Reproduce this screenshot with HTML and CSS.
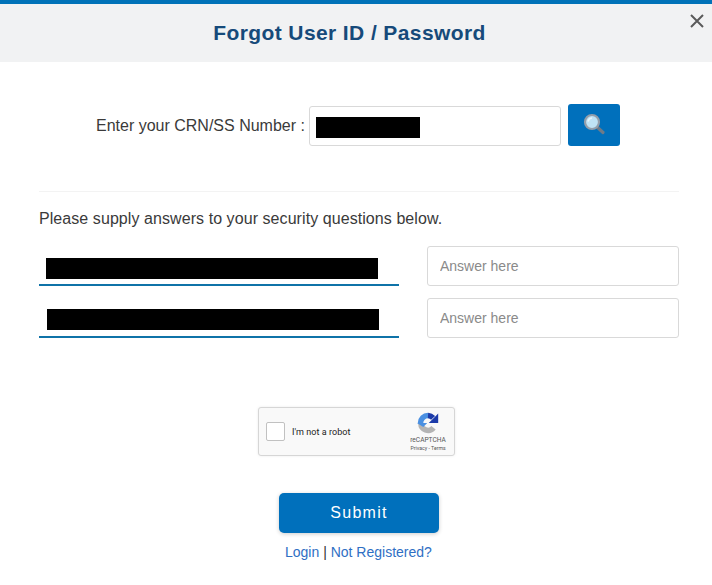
FILE: index.html
```html
<!DOCTYPE html>
<html lang="en">
<head>
<meta charset="utf-8">
<title>Forgot User ID / Password</title>
<link rel="stylesheet" href="styles.css">
</head>
<body>
<div class="modal">
  <header class="head">
    <h1 class="title">Forgot User ID / Password</h1>
    <svg class="close" viewBox="0 0 14 14" aria-label="Close"><path d="M1 1 13 13M13 1 1 13"/></svg>
  </header>
  <main class="body">
    <div class="crn-row">
      <span class="crn-label">Enter your CRN/SS Number :</span>
      <div class="crn-input"><span class="redact redact-crn"></span></div>
      <button class="search" type="button" aria-label="Search">
        <svg class="search-icon" viewBox="0 0 24 24" width="24" height="24">
          <path d="M14.5 14.5 21 20.5" stroke="#6f7b88" stroke-width="3.2" stroke-linecap="round" fill="none"/>
          <circle cx="10" cy="10" r="7" fill="#bfe3f5" stroke="#939eaa" stroke-width="2.2"/>
          <path d="M6 9.5A4.5 4.5 0 0 1 10 6" stroke="#e8f6fc" stroke-width="1.6" fill="none"/>
        </svg>
      </button>
    </div>
    <hr class="rule">
    <p class="intro">Please supply answers to your security questions below.</p>
    <div class="qa">
      <div class="question"><span class="redact redact-q1"></span></div>
      <input class="answer" type="text" placeholder="Answer here">
      <div class="question"><span class="redact redact-q2"></span></div>
      <input class="answer" type="text" placeholder="Answer here">
    </div>
    <div class="captcha">
      <span class="check"></span>
      <span class="robot">I'm not a robot</span>
      <div class="brand">
        <svg viewBox="0 0 28 28" width="22" height="22" fill="none">
          <path d="M5 14A9 9 0 0 0 21 20" stroke="#b4b4b4" stroke-width="7"/>
          <path d="M14 4.5A9.500 9.500 0 0 0 4.500 14" stroke="#4a90e2" stroke-width="7"/>
          <path d="M0 14H13L8 19Z" fill="#4a90e2"/>
          <path d="M14 4.500A9.500 9.500 0 0 1 20.500 7.500" stroke="#1c3aa9" stroke-width="7"/>
          <path d="M27 2V14H15Z" fill="#1c3aa9"/>
        </svg>
        <span class="brand-name">reCAPTCHA</span>
        <span class="brand-links">Privacy - Terms</span>
      </div>
    </div>
    <button class="submit" type="button">Submit</button>
    <p class="links"><a href="#">Login</a> | <a href="#">Not Registered?</a></p>
  </main>
</div>
</body>
</html>
```
FILE: styles.css
```css
* { box-sizing: border-box; }
html, body { margin: 0; height: 100%; background: #fff; overflow: hidden; }
body { font-family: "Liberation Sans", Arial, sans-serif; color: #3a3a3a; }
.modal { width: 712px; height: 585px; }
.head {
  position: relative;
  height: 62px;
  border-top: 4px solid #0072b8;
  background: #f1f2f3;
  display: flex;
  align-items: center;
  justify-content: center;
  padding-right: 13px;
}
.title {
  margin: 0;
  font-size: 21px;
  font-weight: bold;
  letter-spacing: 0.4px;
  color: #164a7a;
}
.close {
  position: absolute;
  top: 10px;
  right: 8px;
  width: 14px;
  height: 14px;
  fill: none;
  stroke: #5a5a5a;
  stroke-width: 2;
}
.body { padding: 42px 33px 0 39px; display: flex; flex-direction: column; }
.crn-row { display: flex; align-items: center; height: 42px; padding-left: 57px; }
.crn-label { font-size: 16px; width: 213px; white-space: nowrap; padding-top: 1px; }
.crn-input {
  width: 252px;
  height: 40px;
  margin-top: 2px;
  border: 1px solid #d9d9d9;
  border-radius: 3px;
  padding: 10px 6px;
}
.redact { display: block; height: 21px; background: #000; }
.redact-crn { width: 104px; }
.search {
  width: 52px;
  height: 42px;
  margin-left: 7px;
  border: 0;
  border-radius: 3px;
  background: #0070bc;
  padding: 0 0 2px;
  display: flex;
  align-items: center;
  justify-content: center;
}
.rule { width: 640px; margin: 45px 0 0; border: 0; border-top: 1px solid #f3f3f3; }
.intro { margin: 18px 0 0; font-size: 16px; line-height: 18px; letter-spacing: 0.07px; }
.qa {
  display: grid;
  grid-template-columns: 360px 252px;
  column-gap: 28px;
  row-gap: 12px;
  margin-top: 18px;
}
.question { height: 40px; border-bottom: 2px solid #0f73a8; padding-top: 12px; }
.redact-q1 { width: 332px; margin-left: 7px; }
.redact-q2 { width: 332px; margin-left: 8px; margin-top: -1px; }
.answer {
  width: 252px;
  height: 40px;
  border: 1px solid #d9d9d9;
  border-radius: 3px;
  padding: 0 12px;
  font: 14px "Liberation Sans", Arial, sans-serif;
  background: #fff;
}
.answer::placeholder { color: #8a8a8a; opacity: 1; }
.captcha {
  width: 197px;
  height: 49px;
  margin: 69px 0 0 219px;
  border: 1px solid #d6d6d6;
  border-radius: 3px;
  background: #f9f9f9;
  box-shadow: 0 0 3px rgba(0,0,0,.08);
  display: flex;
  align-items: center;
  padding-left: 7px;
}
.check {
  width: 19px;
  height: 19px;
  background: #fff;
  border: 1px solid #c1c1c1;
  border-radius: 2px;
}
.robot { margin-left: 7px; font: 9px Roboto, "Liberation Sans", sans-serif; letter-spacing: 0.05px; color: #222; }
.brand {
  margin-left: auto;
  width: 46px;
  margin-right: 3px;
  display: flex;
  flex-direction: column;
  align-items: center;
  color: #555;
}
.brand-name { font: 6.6px Roboto, "Liberation Sans", sans-serif; line-height: 8px; margin-top: 2px; }
.brand-links { font: 5.2px Roboto, "Liberation Sans", sans-serif; line-height: 7px; margin-top: 1px; }
.submit {
  width: 160px;
  height: 40px;
  margin: 37px 0 0 240px;
  border: 0;
  border-radius: 5px;
  background: #0070bc;
  color: #fff;
  font: 16px "Liberation Sans", Arial, sans-serif;
  letter-spacing: 1.25px;
  box-shadow: 0 1px 4px rgba(0,0,0,.2);
}
.links { margin: 11px 0 0 246px; font-size: 14px; line-height: 16px; color: #333; }
.links a { color: #2f6fc4; text-decoration: none; }
```
